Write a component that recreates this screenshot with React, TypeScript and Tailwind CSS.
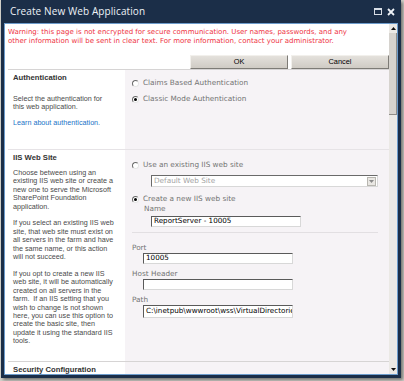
import React from 'react';

const verdana = "font-['DejaVu_Sans',sans-serif]";
const tahoma = "font-['Liberation_Sans',Arial,sans-serif]";

function Radio({ checked }: { checked?: boolean }) {
  return (
    <span className="w-[7px] h-[7px] rounded-full border border-t-[#6a6a6a] border-l-[#6a6a6a] border-b-[#e6e6e6] border-r-[#e6e6e6] bg-white flex items-center justify-center shrink-0">
      {checked && <span className="w-[3px] h-[3px] rounded-full bg-black" />}
    </span>
  );
}

function TextBox({ value, width, tall }: { value: string; width: string; tall?: boolean }) {
  return (
    <div
      className={`${width} ${tall ? 'h-[13px]' : 'h-[11px]'} bg-white border border-t-[#5a5a5a] border-l-[#5a5a5a] border-b-[#d8d8d8] border-r-[#d8d8d8] px-[2px] flex items-center overflow-hidden whitespace-nowrap ${verdana} text-[7.2px] text-black`}
    >
      {value}
    </div>
  );
}

function SectionTitle({ children }: { children: React.ReactNode }) {
  return <div className={`${tahoma} font-bold text-[7.7px] leading-[9px] text-[#333]`}>{children}</div>;
}

function Lines({ lines }: { lines: string[] }) {
  return (
    <div className={`${tahoma} text-[7.2px] leading-[8.4px] text-[#4a4a4a] whitespace-pre`}>
      {lines.map((l, i) => (
        <div key={i}>{l === '' ? '\u00a0' : l}</div>
      ))}
    </div>
  );
}

export default function App() {
  const iisText = [
    'Choose between using an',
    'existing IIS web site or create a',
    'new one to serve the Microsoft',
    'SharePoint Foundation',
    'application.',
    '',
    'If you select an existing IIS web',
    'site, that web site must exist on',
    'all servers in the farm and have',
    'the same name, or this action',
    'will not succeed.',
    '',
    'If you opt to create a new IIS',
    'web site, it will be automatically',
    'created on all servers in the',
    'farm.  If an IIS setting that you',
    'wish to change is not shown',
    'here, you can use this option to',
    'create the basic site, then',
    'update it using the standard IIS',
    'tools.',
  ];

  return (
    <div className="w-[404px] h-[381px] bg-[#d3d2cb] pl-[1px] overflow-hidden">
      <div className="w-[400px] h-[378px] bg-[#1b2e48] px-[3px] pb-[3px] flex flex-col shadow-[2px_2px_3px_rgba(0,0,0,0.45)]">
        {/* Titelleiste */}
        <div className="h-[23px] flex items-center justify-between pl-[6px] pr-[3px] shrink-0">
          <span className="font-['Open_Sans',sans-serif] text-[10px] text-[#eef2f7] tracking-[0.1px]">Create New Web Application</span>
          <div className="flex items-center gap-[5px]">
            <span className="w-[8px] h-[7px] border border-[#d8dee6] border-t-2" />
            <svg width="8" height="8" viewBox="0 0 8 8">
              <path d="M1 1 L7 7 M7 1 L1 7" stroke="#eef2f7" strokeWidth="1.8" />
            </svg>
          </div>
        </div>

        {/* Inhalt */}
        <div className="flex-1 flex border border-[#6d9ccc] bg-white overflow-hidden">
          <div className="flex-1 flex flex-col overflow-hidden pl-[3px]">
            <div className={`${verdana} text-[7px] leading-[9px] text-[#ee3342] pt-[4px]`}>
              <div className="whitespace-nowrap">Warning: this page is not encrypted for secure communication. User names, passwords, and any</div>
              <div className="whitespace-nowrap">other information will be sent in clear text. For more information, contact your administrator.</div>
            </div>

            <div className="flex justify-end gap-[3px] mt-[9px]">
              {['OK', 'Cancel'].map((b) => (
                <div
                  key={b}
                  className={`w-[98px] h-[14px] bg-gradient-to-b from-[#e4e1dc] to-[#cfcbc4] border border-t-[#f2f0ec] border-l-[#f2f0ec] border-b-[#7d7b76] border-r-[#7d7b76] flex items-center justify-center ${tahoma} text-[7.4px] text-black`}
                >
                  {b}
                </div>
              ))}
            </div>

            {/* Authentication */}
            <div className="flex h-[80px] border-t border-[#d6d4d4] shrink-0">
              <div className="w-[117px] pl-[5px] pt-[3px] bg-white">
                <SectionTitle>Authentication</SectionTitle>
                <div className="mt-[13px]">
                  <Lines lines={['Select the authentication for', 'this web application.']} />
                </div>
                <div className={`${tahoma} text-[7.2px] leading-[8.4px] text-[#1a73c7] mt-[7px]`}>Learn about authentication.</div>
              </div>
              <div className="flex-1 bg-[#f6f3f6] pl-[7px] pt-[9px] flex flex-col gap-[7px]">
                <div className="flex items-center gap-[4px] h-[9px]">
                  <Radio />
                  <span className={`${verdana} text-[7.3px] text-[#737373]`}>Claims Based Authentication</span>
                </div>
                <div className="flex items-center gap-[4px] h-[9px]">
                  <Radio checked />
                  <span className={`${verdana} text-[7.3px] text-[#737373]`}>Classic Mode Authentication</span>
                </div>
              </div>
            </div>

            {/* IIS Web Site */}
            <div className="flex h-[212px] border-t border-[#e6e3e6] shrink-0">
              <div className="w-[117px] pl-[5px] pt-[3px] bg-white">
                <SectionTitle>IIS Web Site</SectionTitle>
                <div className="mt-[7px]">
                  <Lines lines={iisText} />
                </div>
              </div>
              <div className={`flex-1 bg-[#f6f3f6] pt-[10px] flex flex-col ${verdana} text-[7.3px] text-[#737373]`}>
                <div className="flex items-center gap-[4px] h-[10px] pl-[7px]">
                  <Radio />
                  <span>Use an existing IIS web site</span>
                </div>
                <div className="ml-[26px] mt-[5px] w-[227px] h-[12px] bg-white border border-t-[#6a6a6a] border-l-[#6a6a6a] border-b-[#d8d8d8] border-r-[#d8d8d8] flex items-center justify-between pl-[2px] pr-[1px]">
                  <span className="text-[#a4a4a4]">Default Web Site</span>
                  <span className="w-[9px] h-[9px] bg-[#e9e7e3] border border-[#b8b6b0] flex items-center justify-center">
                    <svg width="5" height="3" viewBox="0 0 5 3">
                      <path d="M0 0 H5 L2.5 3 Z" fill="#8a8a8a" />
                    </svg>
                  </span>
                </div>
                <div className="flex items-center gap-[4px] h-[10px] pl-[7px] mt-[7px]">
                  <Radio checked />
                  <span>Create a new IIS web site</span>
                </div>
                <div className="pl-[19px] h-[9px] leading-[9px]">Name</div>
                <div className="ml-[26px] mt-[3px]">
                  <TextBox value="ReportServer - 10005" width="w-[150px]" />
                </div>
                <div className="ml-[7px] mt-[5px] w-[246px] h-px bg-[#e2dfe2]" />
                <div className="pl-[7px] mt-[10px] h-[9px] leading-[9px]">Port</div>
                <div className="ml-[18px] mt-[1px]">
                  <TextBox value="10005" width="w-[150px]" />
                </div>
                <div className="pl-[7px] mt-[5px] h-[9px] leading-[9px]">Host Header</div>
                <div className="ml-[18px] mt-[1px]">
                  <TextBox value="" width="w-[150px]" />
                </div>
                <div className="pl-[7px] mt-[5px] h-[9px] leading-[9px]">Path</div>
                <div className="ml-[18px] mt-[1px]">
                  <TextBox value="C:\inetpub\wwwroot\wss\VirtualDirectories\10005" width="w-[150px]" tall />
                </div>
              </div>
            </div>

            {/* Security Configuration */}
            <div className="flex flex-1 border-t border-[#d6d4d4]">
              <div className="w-[117px] pl-[5px] pt-[3px] bg-white">
                <SectionTitle>Security Configuration</SectionTitle>
              </div>
              <div className="flex-1 bg-[#f6f3f6]" />
            </div>
          </div>

          {/* Scrollbar */}
          <div className="w-[8px] flex flex-col bg-[#ebe9e5] shrink-0">
            <div className="h-[9px] bg-[#ebe9e5] flex items-center justify-center">
              <svg width="5" height="3" viewBox="0 0 5 3">
                <path d="M2.5 0 L5 3 H0 Z" fill="#111" />
              </svg>
            </div>
            <div className="h-[82px] bg-[#d6d3ce] border-r border-b border-[#8e8c88]" />
            <div className="flex-1" />
            <div className="h-[9px] flex items-center justify-center">
              <svg width="5" height="3" viewBox="0 0 5 3">
                <path d="M0 0 H5 L2.5 3 Z" fill="#111" />
              </svg>
            </div>
          </div>
        </div>
      </div>
    </div>
  );
}
